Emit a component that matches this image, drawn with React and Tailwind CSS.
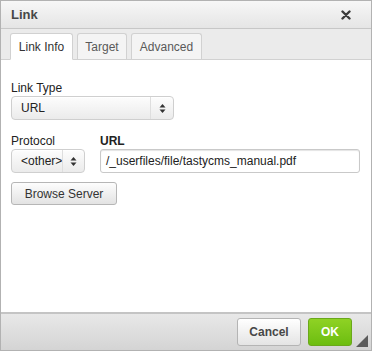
function Arrows() {
  // small stacked up/down triangles used by the native selects
  return (
    <svg width="7" height="11" viewBox="0 0 7 11" className="block">
      <path d="M3.5 1 L6.5 4.5 L0.5 4.5 Z" fill="#333" />
      <path d="M3.5 10 L6.5 6.5 L0.5 6.5 Z" fill="#333" />
    </svg>
  );
}

function SelectBox({ value, width }) {
  return (
    <div
      className={`flex items-stretch h-[24px] ${width} rounded-[4px] border border-[#cfcfcf] bg-gradient-to-b from-[#fdfdfd] to-[#ebebeb] shadow-[inset_0_1px_0_#fff]`}
    >
      <div className="flex-1 flex items-center pl-[9px] text-[12px] text-[#222]">{value}</div>
      <div className="w-[23px] flex items-center justify-center border-l border-[#dedede]">
        <Arrows />
      </div>
    </div>
  );
}

export default function App() {
  const tabs = [
    { label: 'Link Info', active: true, w: 'w-[63px]' },
    { label: 'Target', w: 'w-[50px]' },
    { label: 'Advanced', w: 'w-[71px]' },
  ];

  return (
    <div
      className="w-[372px] h-[351px] flex flex-col border border-[#b2b2b2] bg-white text-[#222]"
      style={{ fontFamily: '"Liberation Sans", Arial, sans-serif' }}
    >
      {/* Title bar */}
      <div className="h-[28px] flex items-center justify-between pl-[10px] pr-[20px] bg-gradient-to-b from-[#f7f7f7] to-[#e5e5e5] border-b border-[#c7c7c7]">
        <span className="text-[13px] font-bold text-[#474747]">Link</span>
        <svg width="10" height="10" viewBox="0 0 10 10">
          <path d="M1.5 1.5 L8.5 8.5 M8.5 1.5 L1.5 8.5" stroke="#3b3b3b" strokeWidth="2.4" strokeLinecap="round" />
        </svg>
      </div>

      {/* Tabs */}
      <div className="h-[31px] flex items-end gap-[4px] pl-[9px] bg-[#ebebeb] border-b border-[#d1d1d1]">
        {tabs.map(t => (
          <div
            key={t.label}
            className={`${t.w} h-[26px] flex items-center justify-center text-[12px] rounded-t-[3px] border border-[#d1d1d1] ${
              t.active ? 'bg-white text-[#333] -mb-px h-[27px] border-b-white' : 'bg-[#f4f4f4] text-[#595959] border-b-0'
            }`}
          >
            {t.label}
          </div>
        ))}
      </div>

      {/* Body */}
      <div className="flex-1 px-[10px] pt-[21px]">
        <div className="text-[12px] text-[#222] leading-[14px] mb-[1px]">Link Type</div>
        <SelectBox value="URL" width="w-[163px]" />

        <div className="flex gap-[15px] mt-[14px]">
          <div>
            <div className="text-[12px] leading-[14px] mb-[1px]">Protocol</div>
            <SelectBox value="<other>" width="w-[74px]" />
          </div>
          <div className="flex-1">
            <div className="text-[12px] font-bold leading-[14px] mb-[1px]">URL</div>
            <div className="h-[24px] w-[260px] rounded-[3px] border border-[#c9c9c9] shadow-[inset_0_1px_1px_#e4e4e4] flex items-center pl-[5px] text-[12px] text-[#222]">
              /_userfiles/file/tastycms_manual.pdf
            </div>
          </div>
        </div>

        <button className="mt-[9px] h-[23px] w-[106px] rounded-[3px] border border-[#b6b6b6] bg-gradient-to-b from-[#fdfdfd] to-[#e3e3e3] text-[12px] text-[#333] flex items-center justify-center">
          Browse Server
        </button>
      </div>

      {/* Footer */}
      <div className="relative h-[38px] flex items-center justify-end gap-[7px] pr-[19px] border-t-[2px] border-[#c4c4c4] bg-gradient-to-b from-[#e8e8e8] to-[#d4d4d4]">
        <button className="h-[28px] w-[64px] rounded-[3px] border border-[#b4b4b4] bg-gradient-to-b from-[#ffffff] to-[#e4e4e4] text-[12px] font-bold text-[#474747]">
          Cancel
        </button>
        <button className="h-[28px] w-[44px] rounded-[3px] border border-[#6aa81a] bg-gradient-to-b from-[#8fd224] to-[#6cbd0f] text-[12px] font-bold text-white">
          OK
        </button>
        <svg width="12" height="12" viewBox="0 0 12 12" className="absolute right-[3px] bottom-[3px]">
          <path d="M12 0 L12 12 L0 12 Z" fill="#5c5c5c" />
        </svg>
      </div>
    </div>
  );
}
